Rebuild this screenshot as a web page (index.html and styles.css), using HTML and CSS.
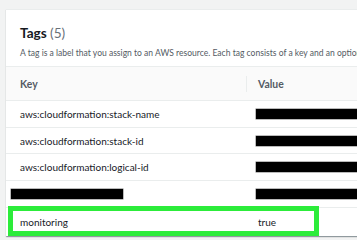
FILE: index.html
```html
<!DOCTYPE html>
<html>
<head>
<meta charset="utf-8">
<link rel="stylesheet" href="styles.css">
</head>
<body>
<div class="card">
  <div class="card-header">
    <h2 class="title">Tags <span class="count">(5)</span></h2>
    <p class="desc">A tag is a label that you assign to an AWS resource. Each tag consists of a key and an optional value.</p>
  </div>
  <div class="table">
    <div class="row head">
      <div class="cell key">Key</div>
      <div class="cell val"><span class="sep"></span>Value</div>
    </div>
    <div class="row">
      <div class="cell key">aws:cloudformation:stack-name</div>
      <div class="cell val"><span class="redact wide"></span></div>
    </div>
    <div class="row">
      <div class="cell key">aws:cloudformation:stack-id</div>
      <div class="cell val"><span class="redact wide"></span></div>
    </div>
    <div class="row">
      <div class="cell key">aws:cloudformation:logical-id</div>
      <div class="cell val"><span class="redact wide"></span></div>
    </div>
    <div class="row">
      <div class="cell key"><span class="redact keybar"></span></div>
      <div class="cell val"><span class="redact wide"></span></div>
    </div>
    <div class="row last">
      <div class="cell key">monitoring</div>
      <div class="cell val">true</div>
      <div class="highlight"></div>
    </div>
  </div>
</div>
</body>
</html>
```
FILE: styles.css
```css
html, body {
  margin: 0;
  padding: 0;
}
body {
  background: #f2f3f3;
  overflow: hidden;
  width: 357px;
  height: 240px;
  font-family: Lato, "Noto Sans", sans-serif;
  color: #16191f;
}
.card {
  margin: 9px 0 0 6px;
  width: 520px;
  background: #fff;
  border-top: 1px solid #eaeded;
  box-shadow: 0 1px 1px rgba(0, 28, 36, 0.3), 1px 1px 1px rgba(0, 28, 36, 0.15);
}
.card-header {
  height: 56px;
  padding: 0 14px;
  box-sizing: border-box;
  padding-top: 14px;
}
.title {
  margin: 0;
  font-size: 13.6px;
  line-height: 18px;
  font-weight: 700;
}
.count {
  font-weight: 400;
  color: #687078;
}
.desc {
  margin: 4px 0 0;
  font-size: 8.55px;
  line-height: 14px;
  color: #545b64;
  white-space: nowrap;
}
.table {
  border-top: 1px solid #eaeded;
}
.row {
  display: flex;
  align-items: center;
  height: 26.7px;
  border-bottom: 1px solid #eaeded;
  box-sizing: border-box;
  position: relative;
  font-size: 10px;
}
.row.head {
  height: 34px;
  background: #fafafa;
  font-weight: 700;
  color: #545b64;
  font-size: 10.4px;
}
.row.last {
  border-bottom: none;
  height: 28px;
}
.cell.key {
  width: 240px;
  padding-left: 14px;
  box-sizing: border-box;
}
.cell.val {
  display: flex;
  align-items: center;
  flex: 1;
  padding-left: 10px;
}
.row.head .cell.val {
  padding-left: 0;
}
.row.last .cell.val {
  padding-left: 12px;
}
.sep {
  width: 1px;
  height: 16px;
  background: #eaeded;
  margin-right: 11px;
}
.redact {
  display: block;
  background: #000;
  height: 10px;
  box-shadow: 0 0 0 0.5px #777;
}
.redact.wide {
  width: 200px;
}
.redact.keybar {
  width: 112px;
  margin-left: -9px;
}
.highlight {
  position: absolute;
  left: 2px;
  top: -2px;
  width: 311px;
  height: 30px;
  border: 5px solid #2cec3a;
  box-sizing: border-box;
}
```
